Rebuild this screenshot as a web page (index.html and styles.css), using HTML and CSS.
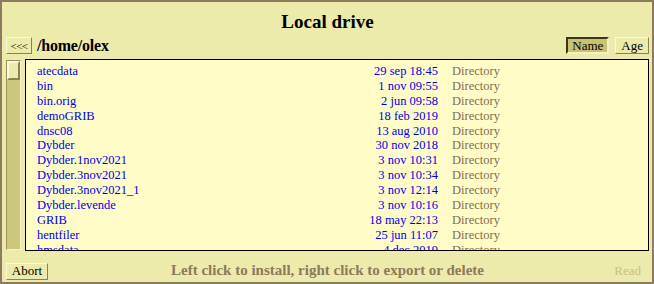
FILE: index.html
```html
<!DOCTYPE html>
<html lang="en">
<head>
    <meta charset="UTF-8">
    <title>Local drive</title>
    <link rel="stylesheet" href="styles.css">
</head>
<body>
    <div class="window">
        <h1 class="title">Local drive</h1>

        <div class="toolbar">
            <button class="btn btn-back">&lt;&lt;&lt;</button>
            <span class="path">/home/olex</span>
            <div class="sort">
                <button class="btn btn-on">Name</button>
                <button class="btn">Age</button>
            </div>
        </div>

        <div class="main">
            <div class="scrollbar">
                <div class="thumb"></div>
            </div>
            <div class="list">
                <div class="row"><span class="name">atecdata</span><span class="date">29 sep 18:45</span><span class="type">Directory</span></div>
                <div class="row"><span class="name">bin</span><span class="date">1 nov 09:55</span><span class="type">Directory</span></div>
                <div class="row"><span class="name">bin.orig</span><span class="date">2 jun 09:58</span><span class="type">Directory</span></div>
                <div class="row"><span class="name">demoGRIB</span><span class="date">18 feb 2019</span><span class="type">Directory</span></div>
                <div class="row"><span class="name">dnsc08</span><span class="date">13 aug 2010</span><span class="type">Directory</span></div>
                <div class="row"><span class="name">Dybder</span><span class="date">30 nov 2018</span><span class="type">Directory</span></div>
                <div class="row"><span class="name">Dybder.1nov2021</span><span class="date">3 nov 10:31</span><span class="type">Directory</span></div>
                <div class="row"><span class="name">Dybder.3nov2021</span><span class="date">3 nov 10:34</span><span class="type">Directory</span></div>
                <div class="row"><span class="name">Dybder.3nov2021_1</span><span class="date">3 nov 12:14</span><span class="type">Directory</span></div>
                <div class="row"><span class="name">Dybder.levende</span><span class="date">3 nov 10:16</span><span class="type">Directory</span></div>
                <div class="row"><span class="name">GRIB</span><span class="date">18 may 22:13</span><span class="type">Directory</span></div>
                <div class="row"><span class="name">hentfiler</span><span class="date">25 jun 11:07</span><span class="type">Directory</span></div>
                <div class="row"><span class="name">hmsdata</span><span class="date">4 dec 2019</span><span class="type">Directory</span></div>
            </div>
        </div>

        <div class="footer">
            <div><button class="btn btn-abort">Abort</button></div>
            <div class="hint">Left click to install, right click to export or delete</div>
            <div class="right"><span class="read">Read</span></div>
        </div>
    </div>
</body>
</html>
```

FILE: styles.css
```css
body {
    margin: 0;
    font-family: "Liberation Serif", "DejaVu Serif", serif;
}

.window {
    width: 654px;
    height: 284px;
    box-sizing: border-box;
    border: 2px solid #8c7b5e;
    background: #ecebab;
    display: flex;
    flex-direction: column;
    padding: 0 3px 0 4px;
}

.title {
    margin: 0;
    padding-top: 5px;
    height: 29px;
    line-height: 29px;
    text-align: center;
    font-size: 19px;
    font-weight: bold;
    color: #000;
}

.toolbar {
    display: flex;
    align-items: center;
    height: 19px;
}

.path {
    margin-left: 5px;
    font-size: 16px;
    font-weight: bold;
    letter-spacing: -0.2px;
}

.sort {
    margin-left: auto;
    display: flex;
    gap: 6px;
}

.btn {
    font-family: "Liberation Serif", serif;
    font-size: 13px;
    line-height: 14px;
    height: 17px;
    padding: 0 5px;
    background: #ecebab;
    color: #000;
    border: 1px solid;
    border-color: #fbfad8 #8c8250 #8c8250 #fbfad8;
    box-sizing: border-box;
}

.btn-back {
    width: 26px;
    padding: 0;
    font-size: 11px;
    letter-spacing: -0.5px;
}

.btn-abort {
    width: 42px;
    padding: 0;
}

.btn-on {
    background: #c9c270;
    border-color: #3a3520 #f4f1c6 #f4f1c6 #3a3520;
    border-width: 2px;
    padding: 0 4px;
}

.main {
    display: flex;
    gap: 4px;
    margin-top: 4px;
    height: 192px;
}

.scrollbar {
    width: 15px;
    margin: 1px 0;
    box-sizing: border-box;
    background: #cdc77c;
    border: 1px solid;
    border-color: #9a9058 #f6f3c8 #f6f3c8 #9a9058;
}

.thumb {
    height: 19px;
    box-sizing: border-box;
    background: #ecebab;
    border: 2px solid;
    border-color: #fbfad8 #8c8250 #8c8250 #fbfad8;
}

.list {
    flex: 1;
    box-sizing: border-box;
    border: 1px solid #000;
    background: #fffcc8;
    padding: 4px 0 0 11px;
    overflow: hidden;
    font-size: 12.5px;
}

.row {
    display: grid;
    grid-template-columns: 260px 141px 14px auto;
    height: 14.9px;
    line-height: 14.9px;
    white-space: nowrap;
}

.name,
.date {
    color: #0000e6;
}

.date {
    text-align: right;
}

.type {
    grid-column: 4;
    color: #7f6e4e;
}

.footer {
    display: grid;
    grid-template-columns: 1fr auto 1fr;
    align-items: center;
    margin-top: 10px;
    height: 17px;
}

.hint {
    font-size: 15px;
    font-weight: bold;
    color: #8c7a5a;
}

.right {
    text-align: right;
    padding-right: 8px;
}

.read {
    font-size: 13px;
    color: #c9c187;
}
```
